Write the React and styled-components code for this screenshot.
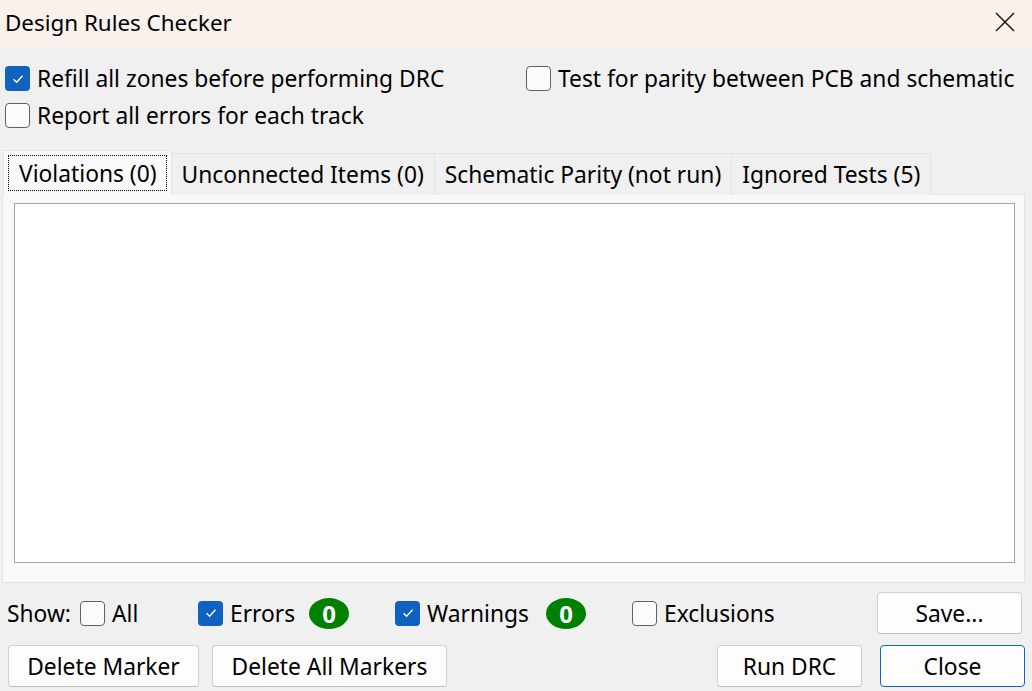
import React from "react";
import styled, { createGlobalStyle } from "styled-components";

const GlobalStyle = createGlobalStyle`
  html, body {
    margin: 0;
    padding: 0;
    background: #f0f0f0;
  }
  body {
    font-family: "Noto Sans", "Open Sans", "Liberation Sans", sans-serif;
    color: #000;
  }
`;

const Window = styled.div`
  width: 1032px;
  height: 691px;
  display: flex;
  flex-direction: column;
  background: #f0f0f0;
  overflow: hidden;
  font-size: 22.8px;
`;

const TitleBar = styled.div`
  height: 48px;
  flex-shrink: 0;
  display: flex;
  align-items: center;
  justify-content: space-between;
  padding: 0 17px 4px 5px;
  background: #f9f1ec;
  box-sizing: border-box;
`;

const Title = styled.div`
  font-size: 22.4px;
`;

const Options = styled.div`
  display: grid;
  grid-template-columns: 521px 1fr;
  grid-auto-rows: 25px;
  row-gap: 12px;
  padding: 18px 0 0 5px;
  height: 102px;
  box-sizing: border-box;
`;

const CheckLabel = styled.label`
  display: flex;
  align-items: center;
  gap: 7px;
  height: 25px;
  white-space: nowrap;
  flex-shrink: 0;
  width: ${({ w }) => (w ? `${w}px` : "auto")};
`;

const Box = styled.span`
  width: 25px;
  height: 25px;
  box-sizing: border-box;
  border-radius: 4px;
  flex-shrink: 0;
  display: flex;
  align-items: center;
  justify-content: center;
  border: ${({ checked }) => (checked ? "none" : "1.5px solid #616161")};
  background: ${({ checked }) => (checked ? "#0f62c0" : "#fbfbfb")};
`;

const Check = ({ checked, w, children }) => (
  <CheckLabel w={w}>
    <Box checked={checked}>
      {checked && (
        <svg width="14" height="14" viewBox="0 0 14 14">
          <path d="M2.5 7.3 L5.6 10.3 L11.5 3.8" fill="none" stroke="#fff" strokeWidth="1.4" />
        </svg>
      )}
    </Box>
    <span>{children}</span>
  </CheckLabel>
);

const TabStrip = styled.div`
  display: flex;
  align-items: flex-end;
  padding-left: 3px;
  height: 45px;
`;

const Tab = styled.div`
  height: ${({ active }) => (active ? 45 : 42)}px;
  box-sizing: border-box;
  padding: ${({ active }) => (active ? "4px" : "0 10px 0 10px")};
  display: flex;
  align-items: center;
  background: ${({ active }) => (active ? "#f9f9f9" : "#f0f0f0")};
  border: 1px solid #e3e3e3;
  border-bottom: none;
  margin-left: ${({ active }) => (active ? 0 : -1)}px;
  position: relative;
  z-index: ${({ active }) => (active ? 1 : 0)};
  white-space: nowrap;
`;

const FocusRect = styled.span`
  display: flex;
  align-items: center;
  height: 100%;
  padding: 0 9px 0 10px;
  box-sizing: border-box;
  border: 1px dotted #000;
`;

const Panel = styled.div`
  margin: -1px 7px 0 2px;
  height: 389px;
  box-sizing: border-box;
  background: #f9f9f9;
  border: 1px solid #e3e3e3;
  padding: 8px 9px 19px 11px;
  display: flex;
`;

const ListBox = styled.div`
  flex: 1;
  background: #fff;
  border: 1px solid #a5a5a5;
`;

const ShowRow = styled.div`
  display: flex;
  align-items: center;
  height: 50px;
  margin-top: 5px;
  padding: 0 10px 0 7px;
`;

const ShowLabel = styled.span`
  width: 73px;
  flex-shrink: 0;
`;

const Badge = styled.span`
  width: 40px;
  height: 31px;
  border-radius: 50%;
  background: #008000;
  color: #fff;
  font-weight: 700;
  display: flex;
  align-items: center;
  justify-content: center;
  font-size: 24px;
  flex-shrink: 0;
  margin-right: 46px;
`;

const ButtonRow = styled.div`
  display: flex;
  align-items: center;
  padding: 7px 7px 0 8px;
  gap: 13px;
`;

const Button = styled.button`
  font: inherit;
  color: #000;
  height: 42px;
  width: ${({ w }) => w}px;
  background: #fdfdfd;
  border: 1px solid ${({ focused }) => (focused ? "#0e66c4" : "#d0d0d0")};
  border-bottom-color: ${({ focused }) => (focused ? "#0e66c4" : "#bdbdbd")};
  border-radius: 4px;
  padding: 0;
  flex-shrink: 0;
  margin-left: ${({ push }) => (push ? "auto" : 0)};
  margin-right: ${({ tail }) => (tail ? tail : 0)}px;
`;

export default function App() {
  return (
    <Window>
      <GlobalStyle />
      <TitleBar>
        <Title>Design Rules Checker</Title>
        <svg width="20" height="20" viewBox="0 0 20 20">
          <path d="M1 1 L19 19 M19 1 L1 19" stroke="#1a1a1a" strokeWidth="1.5" />
        </svg>
      </TitleBar>
      <Options>
        <Check checked>Refill all zones before performing DRC</Check>
        <Check>Test for parity between PCB and schematic</Check>
        <Check>Report all errors for each track</Check>
      </Options>
      <TabStrip>
        <Tab active>
          <FocusRect>Violations (0)</FocusRect>
        </Tab>
        <Tab>Unconnected Items (0)</Tab>
        <Tab>Schematic Parity (not run)</Tab>
        <Tab>Ignored Tests (5)</Tab>
      </TabStrip>
      <Panel>
        <ListBox />
      </Panel>
      <ShowRow>
        <ShowLabel>Show:</ShowLabel>
        <Check w={118}>All</Check>
        <Check w={111} checked>
          Errors
        </Check>
        <Badge>0</Badge>
        <Check w={151} checked>
          Warnings
        </Check>
        <Badge>0</Badge>
        <Check>Exclusions</Check>
        <Button w={145} push>
          Save...
        </Button>
      </ShowRow>
      <ButtonRow>
        <Button w={191}>Delete Marker</Button>
        <Button w={235}>Delete All Markers</Button>
        <Button w={145} push tail={5}>
          Run DRC
        </Button>
        <Button w={145} focused>
          Close
        </Button>
      </ButtonRow>
    </Window>
  );
}
